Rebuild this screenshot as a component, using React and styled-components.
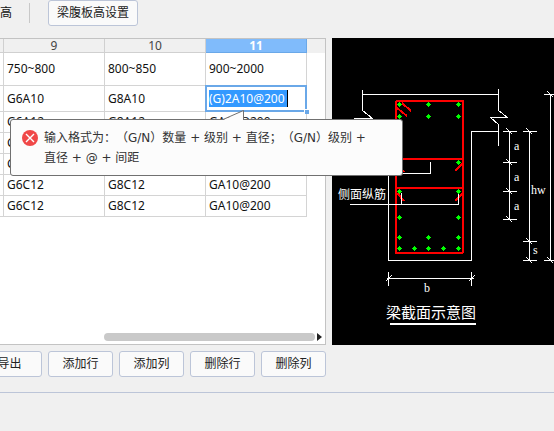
import styled, { createGlobalStyle } from "styled-components";

const GlobalStyle = createGlobalStyle`
  body {
    margin: 0;
    background-color: #f0f0f0;
    color: #111;
    font-family: "Noto Sans", "Noto Sans CJK SC", sans-serif;
    font-size: 12px;
    overflow: hidden;
  }
`;

const Toolbar = styled.div`
  display: flex;
  height: 38px;
`;

const ToolbarLabel = styled.span`
  line-height: 26px;
`;

const Separator = styled.div`
  width: 1px;
  height: 20px;
  margin: 3px 18px 0 17px;
  background-color: #c8c8c8;
`;

const Button = styled.button`
  flex: none;
  width: ${(props) => (props.$wide ? "90px" : "65px")};
  height: 26px;
  padding: 0;
  border: 1px solid #bcc5d8;
  border-radius: 3px;
  background-color: #fafafa;
  color: #222;
  font: inherit;
  line-height: 24px;
  white-space: nowrap;
`;

const Content = styled.main`
  display: grid;
  grid-template-columns: 326px 1fr;
  column-gap: 6px;
`;

const GridPanel = styled.section`
  position: relative;
  display: flex;
  flex-direction: column;
  justify-content: space-between;
  border: 1px solid #c3c3c3;
  border-left: 0;
  background-color: white;
`;

const Table = styled.table`
  width: 100%;
  table-layout: fixed;
  border-collapse: separate;
  border-spacing: 0;
`;

const HeadCell = styled.th`
  box-sizing: border-box;
  width: ${(props) => props.$width || "auto"};
  height: 14px;
  padding: 0;
  border-right: ${(props) => (props.$width ? "1px solid #d0d0d0" : "0")};
  border-bottom: 1px solid ${(props) => (props.$width ? "#d0d0d0" : "#f0f0f0")};
  background-color: #f0f0f0;
  color: #444;
  font-weight: normal;
  line-height: 13px;

  &[aria-selected="true"] {
    border-color: #6aa8e8;
    background-color: #80bbfb;
    color: white;
    font-weight: bold;
  }
`;

const Cell = styled.td`
  box-sizing: border-box;
  height: ${(props) => props.$height};
  padding: 0 3px;
  border-right: 1px solid #d4d4d4;
  border-bottom: 1px solid #d4d4d4;
  line-height: 16px;
  white-space: nowrap;
`;

const EditingCell = styled(Cell)`
  position: relative;

  &::before {
    content: "";
    position: absolute;
    inset: -1px;
    border: 2px solid #6aa8e8;
  }

  &::after {
    content: "";
    position: absolute;
    right: -3px;
    bottom: -3px;
    width: 4px;
    height: 4px;
    border: 1px solid white;
    border-width: 1px 0 0 1px;
    background-color: #6aa8e8;
  }
`;

const CellInput = styled.input`
  position: relative;
  display: block;
  field-sizing: content;
  height: 17px;
  padding: 0 2px 0 0;
  border: 0;
  border-right: 1px solid black;
  outline: 0;
  background-color: #3399ff;
  color: white;
  font: inherit;
`;

const ScrollBar = styled.div`
  display: flex;
  align-items: center;
  gap: 2px;
  padding: 0 3px 3px 104px;
`;

const ScrollThumb = styled.div`
  flex: 1;
  height: 8px;
  border-radius: 4px;
  background-color: #c9c9c9;
`;

const ScrollArrow = styled.button`
  display: flex;
  padding: 0;
  border: 0;
  background: none;
`;

const Tooltip = styled.div`
  position: absolute;
  z-index: 1;
  top: 80px;
  left: 10px;
  box-sizing: border-box;
  display: flex;
  gap: 6px;
  width: 393px;
  padding: 8px 24px 7px 11px;
  border: 1px solid #707070;
  border-radius: 3px;
  background-color: #fcfcfc;
  color: #333;
  font-family: "DejaVu Sans", "Noto Sans CJK SC", sans-serif;
  line-height: 20px;
  text-spacing-trim: space-all;
`;

const TooltipTail = styled.svg`
  position: absolute;
  top: -10px;
  left: 212px;
`;

const ErrorIcon = styled.svg`
  flex: none;
  margin-top: 2px;
`;

const DiagramPanel = styled.section`
  background-color: black;
`;

const Diagram = styled.svg`
  display: block;
  fill: none;
  stroke: white;
  shape-rendering: crispEdges;

  text {
    fill: white;
    stroke: none;
    font-family: "Liberation Serif", "Noto Sans CJK SC", serif;
    font-size: 12px;
  }

  .title {
    font-size: 15px;
  }

  .steel {
    stroke: #ff0000;
    stroke-width: 2;
  }
`;

const Actions = styled.div`
  display: flex;
  gap: 6px;
  margin-left: -23px;
  padding: 6px 0 15px;
`;

const Footer = styled.footer`
  border-top: 1px solid #bcc5d8;
`;

const heights = ["750~800", "800~850", "900~2000"];

const rows = [
  ["G6A12", "G8A12", "GA12@200"],
  ["G6B12", "G8B12", "GB12@200"],
  ["G6C12", "G8C12", "GC12@200"],
  ["G6C12", "G8C12", "GA10@200"],
  ["G6C12", "G8C12", "GA10@200"],
];

const bars = [
  [399, 104], [428, 104], [458, 104],
  [399, 116], [428, 116], [458, 116],
  [458, 162],
  [399, 191], [458, 191],
  [399, 217], [458, 217],
  [399, 237], [428, 237], [458, 237],
  [399, 248], [414, 248], [428, 248], [443, 248], [458, 248],
];

const ticks = [
  [509, 131], [509, 162], [509, 191], [509, 219],
  [529, 131], [529, 241], [529, 260],
  [550, 94], [550, 260],
];

const BeamDiagram = () => (
  <Diagram
    width="222"
    height="307"
    viewBox="332 38 222 307"
    role="img"
    aria-label="梁截面示意图"
  >
    {/* slab and web outline */}
    <g transform="translate(0.5 0.5)">
      <path d="M362 94H498M362 89V110L372 118H354L362 125V145" />
      <path d="M498 88V110L507 117H490L498 124V145" />
      <path d="M498 131H471V260H388V131H362" />
    </g>

    {/* stirrup and ties */}
    <g className="steel">
      <rect x="396" y="101" width="67" height="152" rx="1" />
      <path d="M396 159H463M396 188H463" />
      <path d="M402 103L411 111M397 108L407 116" />
      <path d="M463 163L455 171M397 163L404 172" />
      <path d="M397 193L404 201M463 193L455 201" />
    </g>

    {/* leaders */}
    <g transform="translate(0.5 0.5)">
      <path d="M430 161V173H380" />
      <path d="M349 204H458V193M401 192V204" />
    </g>

    {bars.map(([x, y]) => (
      <path
        key={`${x}-${y}`}
        d={`M${x - 2} ${y}h1v-1h1v-1h1v1h1v1h1v1h-1v1h-1v1h-1v-1h-1v-1h-1z`}
        fill="#00ff00"
        stroke="none"
      />
    ))}

    {/* dimension lines */}
    <g transform="translate(0.5 0.5)">
      <path d="M509 131V219M529 131V260M550 94V260" />
      {ticks.map(([x, y]) => (
        <path
          key={`${x}-${y}`}
          d={`M${x - 7} ${y}h14M${x - 3} ${y - 3}l6 6`}
        />
      ))}
      <path d="M388 271V285M471 271V285M386 278H473" />
      <path d="M385 281L391 275M468 281L474 275" />
    </g>

    <text x="514" y="150">a</text>
    <text x="514" y="181">a</text>
    <text x="514" y="210">a</text>
    <text x="531" y="194">hw</text>
    <text x="533" y="254">s</text>
    <text x="424" y="292">b</text>
    <text x="338" y="199">侧面纵筋</text>
    <text className="title" x="386" y="318">梁截面示意图</text>
    <path d="M390 324H476" strokeWidth="2" />
  </Diagram>
);

const FormatTooltip = () => (
  <Tooltip role="alert">
    <TooltipTail width="22" height="11" viewBox="0 0 22 11">
      <path d="M0 10L20 1V10V11H0Z" fill="#fcfcfc" />
      <path d="M0 9.5L20.5 0.5V9.5" fill="none" stroke="#707070" />
    </TooltipTail>
    <ErrorIcon width="16" height="16" viewBox="0 0 16 16">
      <circle cx="8" cy="8" r="8" fill="#f04848" />
      <path d="M4 4L12 12M12 4L4 12" stroke="white" strokeWidth="1.4" />
    </ErrorIcon>
    <span>
      输入格式为：（G/N）数量 + 级别 + 直径；（G/N）级别 + 直径 + @ + 间距
    </span>
  </Tooltip>
);

const App = () => {
  return (
    <>
      <GlobalStyle />
      <Toolbar>
        <ToolbarLabel>高</ToolbarLabel>
        <Separator />
        <Button $wide>梁腹板高设置</Button>
      </Toolbar>
      <Content>
        <GridPanel>
          <Table>
            <thead>
              <tr>
                <HeadCell $width="4px" />
                <HeadCell $width="101px">9</HeadCell>
                <HeadCell $width="101px">10</HeadCell>
                <HeadCell $width="101px" aria-selected="true">11</HeadCell>
                <HeadCell />
              </tr>
            </thead>
            <tbody>
              <tr>
                <Cell $height="33px" />
                {heights.map((height) => (
                  <Cell key={height}>{height}</Cell>
                ))}
              </tr>
              <tr>
                <Cell $height="26px" />
                <Cell>G6A10</Cell>
                <Cell>G8A10</Cell>
                <EditingCell>
                  <CellInput aria-label="11" defaultValue="(G)2A10@200" />
                </EditingCell>
              </tr>
              {rows.map((row, index) => (
                <tr key={index}>
                  <Cell $height="21px" />
                  {row.map((text) => (
                    <Cell key={text}>{text}</Cell>
                  ))}
                </tr>
              ))}
            </tbody>
          </Table>
          <ScrollBar>
            <ScrollThumb />
            <ScrollArrow aria-label="向右滚动">
              <svg width="5" height="8" viewBox="0 0 5 8">
                <path d="M0 0L5 4L0 8Z" fill="#222" />
              </svg>
            </ScrollArrow>
          </ScrollBar>
          <FormatTooltip />
        </GridPanel>
        <DiagramPanel>
          <BeamDiagram />
        </DiagramPanel>
      </Content>
      <Actions>
        <Button>导出</Button>
        <Button>添加行</Button>
        <Button>添加列</Button>
        <Button>删除行</Button>
        <Button>删除列</Button>
      </Actions>
      <Footer />
    </>
  );
};

export default App;
